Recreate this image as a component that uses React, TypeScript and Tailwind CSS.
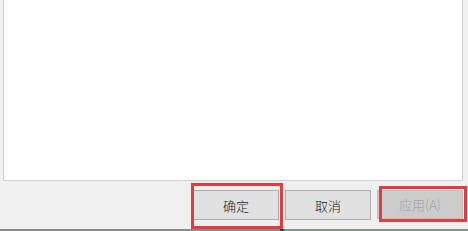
import React from "react";

export default function App() {
  const font = { fontFamily: '"Noto Sans CJK SC", "Noto Sans", sans-serif' };
  return (
    <div className="relative w-[468px] h-[231px] overflow-hidden bg-[#f0f0f0] flex flex-col" style={font}>
      <div className="ml-[3px] w-[460px] h-[181px] bg-white border border-t-0 border-[#d2d2d2] shrink-0" />
      <div className="mt-[9px] flex gap-[6px] pl-[193px]">
        <button className="w-[86px] h-[30px] bg-[#e1e1e1] border border-[#adadad] text-[13px] font-light text-[#1a1a1a] leading-none">
          确定
        </button>
        <button className="w-[86px] h-[30px] bg-[#e1e1e1] border border-[#adadad] text-[13px] font-light text-[#1a1a1a] leading-none">
          取消
        </button>
        <button className="w-[86px] h-[29px] bg-[#cccccc] border border-[#bfbfbf] text-[13px] font-light text-[#a3a3a3] leading-none">
          应用(A)
        </button>
      </div>
      <div className="mt-auto flex h-[2px]">
        <div className="w-[280px] bg-[#8c8c8c]" />
        <div className="w-[4px] bg-[#2a3a6a]" />
        <div className="flex-1 bg-[#7f9a84]" />
      </div>
      <div className="absolute left-[191px] top-[183px] w-[92px] h-[46px] border-[3px] border-[#e53b3f]" />
      <div className="absolute left-[379px] top-[186px] w-[88px] h-[36px] border-[3px] border-[#e53b3f]" />
    </div>
  );
}
